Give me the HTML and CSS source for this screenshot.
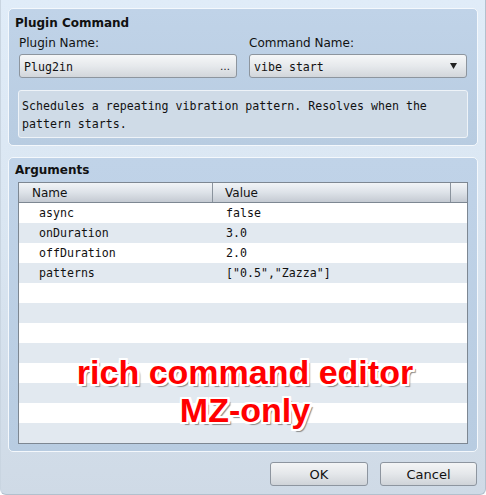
FILE: index.html
```html
<!DOCTYPE html>
<html>
<head>
<meta charset="utf-8">
<link rel="stylesheet" href="styles.css">
</head>
<body>
<div class="window">
  <section class="group cmd">
    <div class="group-title">Plugin Command</div>
    <div class="fields">
      <div class="field">
        <div class="label">Plugin Name:</div>
        <div class="input"><span>Plug2in</span><span class="dots">…</span></div>
      </div>
      <div class="field">
        <div class="label">Command Name:</div>
        <div class="input"><span>vibe start</span><svg class="arrow" width="7" height="6" viewBox="0 0 7 6"><polygon points="0,0 7,0 3.5,6" fill="#222"/></svg></div>
      </div>
    </div>
    <div class="desc">Schedules a repeating vibration pattern. Resolves when the pattern starts.</div>
  </section>

  <section class="group args">
    <div class="group-title">Arguments</div>
    <div class="table">
      <div class="thead">
        <div class="th c-name">Name</div>
        <div class="th c-value">Value</div>
        <div class="th c-pad"></div>
      </div>
      <div class="row"><div class="c-name">async</div><div class="c-value">false</div></div>
      <div class="row"><div class="c-name">onDuration</div><div class="c-value">3.0</div></div>
      <div class="row"><div class="c-name">offDuration</div><div class="c-value">2.0</div></div>
      <div class="row"><div class="c-name">patterns</div><div class="c-value">["0.5","Zazza"]</div></div>
      <div class="row"></div>
      <div class="row"></div>
      <div class="row"></div>
      <div class="row"></div>
      <div class="row"></div>
      <div class="row"></div>
      <div class="row"></div>
      <div class="row"></div>
      <div class="overlay">rich command editor<br>MZ-only</div>
    </div>
  </section>

  <div class="buttons">
    <button class="btn ok">OK</button>
    <button class="btn cancel">Cancel</button>
  </div>
</div>
</body>
</html>
```

FILE: styles.css
```css
* { box-sizing: border-box; }
html, body { margin: 0; padding: 0; }
body {
  width: 486px;
  height: 495px;
  overflow: hidden;
  font-family: "DejaVu Sans", sans-serif;
  font-size: 12px;
  color: #111;
}
.window {
  width: 486px;
  height: 495px;
  background: linear-gradient(#e0ecf8 0%, #d9e5f1 50%, #cfdae6 100%);
  border-right: 1px solid #b3c0cd;
  border-bottom: 1px solid #b3c0cd;
  border-left: 1px solid #c9d5e1;
  border-radius: 0 0 6px 6px;
  padding: 8px 7px 0 7px;
  display: flex;
  flex-direction: column;
}
.group {
  width: 470px;
  border: 1px solid #f4f8fc;
  border-radius: 5px;
  background: linear-gradient(#c0d3e8, #b8cce1);
  padding-left: 6px;
  padding-right: 9px;
}
.group-title {
  font-weight: bold;
  line-height: 15px;
  height: 15px;
}
.cmd {
  height: 138px;
  padding-top: 7px;
}
.fields {
  display: flex;
  gap: 12px;
  margin-top: 5px;
  padding-left: 4px;
}
.field { width: 218px; }
.label {
  line-height: 15px;
  height: 15px;
  margin-bottom: 3px;
}
.input {
  height: 24px;
  border: 1px solid #8d959e;
  border-radius: 3px;
  background: linear-gradient(#f6f7f8 0%, #e6e9ec 50%, #d2d6db 100%);
  font-family: "DejaVu Sans Mono", monospace;
  font-size: 11.6px;
  line-height: 22px;
  padding: 1px 9px 0 4px;
  display: flex;
  align-items: center;
  justify-content: space-between;
  color: #111;
}
.input .dots {
  font-family: "DejaVu Sans", sans-serif;
  font-size: 10px;
  margin-right: -3px;
}
.input .arrow { margin-right: 0; margin-top: -1px; }
.desc {
  margin-top: 12px;
  height: 48px;
  width: 450px;
  margin-left: 3px;
  border: 1px solid #eef3f8;
  border-radius: 3px;
  background: #cfdbe7;
  font-family: "DejaVu Sans Mono", monospace;
  font-size: 11.6px;
  line-height: 18px;
  padding: 6px 3px 0 3px;
  color: #111;
}
.args {
  margin-top: 11px;
  height: 295px;
  padding-top: 5px;
}
.table {
  position: relative;
  margin-top: 4px;
  margin-left: 3px;
  width: 450px;
  height: 262px;
  border: 1px solid #7d8792;
  background: #fff;
}
.thead {
  display: flex;
  height: 20px;
  border-bottom: 1px solid #7d8792;
  background: linear-gradient(#f1f4f7 0%, #dde2e8 50%, #c4cad2 100%);
}
.th {
  line-height: 15px;
  padding-top: 3px;
}
.thead .c-name {
  width: 194px;
  border-right: 1px solid #8a939d;
  padding-left: 13px;
}
.thead .c-value {
  width: 238px;
  border-right: 1px solid #8a939d;
  padding-left: 12px;
}
.thead .c-pad { flex: 1; }
.row {
  display: flex;
  height: 20px;
  font-family: "DejaVu Sans Mono", monospace;
  font-size: 11.6px;
  line-height: 21px;
  color: #111;
}
.row:nth-of-type(odd) { background: #e2e9f0; }
.row .c-name { width: 194px; padding-left: 20px; }
.row .c-value { padding-left: 13px; }
.overlay {
  position: absolute;
  left: 0;
  right: 0;
  top: 170px;
  text-align: center;
  font-family: "Liberation Sans", Arial, sans-serif;
  font-weight: bold;
  font-size: 34px;
  line-height: 38px;
  color: #ff0000;
  text-shadow:
    2px 0 0 #fff, -2px 0 0 #fff, 0 2px 0 #fff, 0 -2px 0 #fff,
    2px 2px 0 #fff, -2px -2px 0 #fff, 2px -2px 0 #fff, -2px 2px 0 #fff,
    1px 2px 0 #fff, 2px 1px 0 #fff, -1px 2px 0 #fff, 2px -1px 0 #fff,
    3px 3px 1px #8a8a8a;
  padding-left: 4px;
}
.buttons {
  display: flex;
  justify-content: flex-end;
  gap: 12px;
  margin-top: 10px;
  padding-right: 1px;
}
.btn {
  height: 24px;
  border: 1px solid #8d959f;
  border-radius: 3px;
  background: linear-gradient(#f4f5f6 0%, #e4e7ea 50%, #cfd3d8 100%);
  font-family: "DejaVu Sans", sans-serif;
  font-size: 13px;
  color: #111;
  padding: 0;
  margin: 0;
}
.ok { width: 98px; }
.cancel { width: 97px; }
```
